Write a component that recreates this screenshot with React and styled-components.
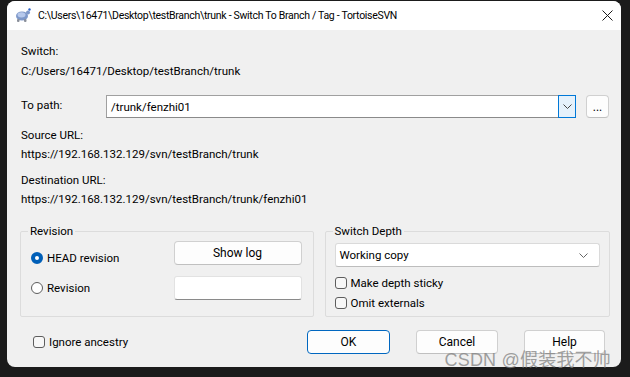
import React from "react";
import styled, { createGlobalStyle } from "styled-components";

const GlobalStyle = createGlobalStyle`
  html, body {
    margin: 0;
    padding: 0;
    background: #1b1b1b;
  }
  body {
    font-family: Roboto, "Liberation Sans", "Noto Sans CJK SC", sans-serif;
    font-size: 11.5px;
    color: #000;
  }
  #root {
    width: 630px;
    height: 377px;
    overflow: hidden;
  }
`;

const Screen = styled.div`
  position: relative;
  width: 630px;
  height: 377px;
  padding: 1px 9px 0 7px;
  box-sizing: border-box;
`;

const Dialog = styled.div`
  width: 614px;
  height: 366px;
  background: #f0f0f0;
  border-radius: 8px;
  overflow: hidden;
  display: flex;
  flex-direction: column;
`;

const TitleBar = styled.div`
  height: 29px;
  background: #fff;
  display: flex;
  align-items: center;
  padding: 0 2px 0 7px;
  flex-shrink: 0;
`;

const TitleText = styled.div`
  flex: 1;
  margin-left: 7px;
  font-size: 10.5px;
  letter-spacing: -0.3px;
  white-space: nowrap;
`;

const CloseButton = styled.div`
  width: 24px;
  height: 29px;
  display: flex;
  align-items: center;
  justify-content: center;
`;

const Body = styled.div`
  flex: 1;
  display: flex;
  flex-direction: column;
  padding: 12px 12px 0 14px;
`;

const Line = styled.div`
  height: ${(p) => p.$h || 19}px;
  line-height: ${(p) => p.$h || 19}px;
  margin-top: ${(p) => p.$mt || 0}px;
  white-space: nowrap;
`;

const PathRow = styled.div`
  display: flex;
  align-items: center;
  margin-top: 14px;
  height: 23px;
`;

const PathLabel = styled.div`
  width: 85px;
  margin-top: -3px;
`;

const Combo = styled.div`
  display: flex;
  align-items: stretch;
  height: ${(p) => p.$h || 23}px;
  background: #fff;
  border: 1px solid ${(p) => (p.$flat ? "#dadada" : "#a0a0a0")};
  border-bottom-color: ${(p) => (p.$flat ? "#bdbdbd" : "#8a8a8a")};
  border-radius: ${(p) => (p.$flat ? 3 : 0)}px;
  box-sizing: border-box;
  flex: ${(p) => (p.$grow ? 1 : "none")};
`;

const ComboText = styled.div`
  flex: 1;
  padding-left: ${(p) => p.$pl || 4}px;
  display: flex;
  align-items: center;
`;

const DropButton = styled.div`
  width: 16px;
  display: flex;
  align-items: center;
  justify-content: center;
  background: ${(p) => (p.$active ? "#e5f1fb" : "transparent")};
  border: 1px solid ${(p) => (p.$active ? "#0078d7" : "transparent")};
  margin: -1px -1px -1px 0;
  padding-right: ${(p) => (p.$active ? 0 : 8)}px;
`;

const Button = styled.div`
  box-sizing: border-box;
  width: ${(p) => p.$w}px;
  height: ${(p) => p.$h || 24}px;
  background: #fdfdfd;
  border: 1px solid ${(p) => (p.$default ? "#0067c0" : "#d0d0d0")};
  border-bottom-color: ${(p) => (p.$default ? "#0067c0" : "#c0c0c0")};
  border-radius: 4px;
  display: flex;
  align-items: center;
  justify-content: center;
  font-size: 12px;
`;

const Groups = styled.div`
  display: flex;
  gap: 11px;
  margin-top: 14px;
  margin-left: -1px;
  margin-right: -1px;
`;

const Group = styled.fieldset`
  margin: 0;
  width: ${(p) => p.$w}px;
  box-sizing: border-box;
  height: 94px;
  border: 1px solid #dcdcdc;
  border-radius: 2px;
  padding: ${(p) => p.$pad};
`;

const Legend = styled.legend`
  padding: 0 2px;
  margin-left: ${(p) => p.$ml}px;
  line-height: 16px;
`;

const RevisionGrid = styled.div`
  display: grid;
  grid-template-columns: 1fr 128px;
  row-gap: 8px;
  align-items: start;
`;

const Option = styled.label`
  display: flex;
  align-items: center;
  gap: 4px;
  height: ${(p) => p.$h || 20}px;
  margin-top: ${(p) => p.$mt || 0}px;
`;

const Radio = styled.span`
  width: 12px;
  height: 12px;
  border-radius: 50%;
  box-sizing: border-box;
  border: ${(p) => (p.$checked ? "4px solid #005fb8" : "1px solid #5d5d5d")};
  background: #fff;
  flex-shrink: 0;
`;

const Check = styled.span`
  width: 12px;
  height: 12px;
  border-radius: 3px;
  box-sizing: border-box;
  border: 1px solid #5d5d5d;
  background: #f7f7f7;
  flex-shrink: 0;
`;

const TextField = styled.div`
  width: 128px;
  height: 24px;
  box-sizing: border-box;
  background: #fff;
  border: 1px solid #e2e2e2;
  border-bottom: 1px solid #8a8a8a;
  border-radius: 3px;
`;

const DepthStack = styled.div`
  display: flex;
  flex-direction: column;
`;

const Footer = styled.div`
  display: flex;
  align-items: center;
  margin-top: 13px;
  margin-left: 12px;
  margin-right: 4px;
`;

const FooterButtons = styled.div`
  margin-left: auto;
  display: flex;
  gap: 26px;
`;

const Watermark = styled.div`
  position: absolute;
  right: 19px;
  bottom: 6px;
  font-family: "Liberation Sans", "Noto Sans CJK SC", sans-serif;
  font-size: 18px;
  color: rgba(130, 130, 130, 0.75);
  white-space: nowrap;
  letter-spacing: 0.2px;
`;

function TurtleIcon() {
  return (
    <svg width="17" height="15" viewBox="0 0 17 15">
      <ellipse cx="8" cy="8" rx="6" ry="4.5" fill="#7e98c9" />
      <ellipse cx="7.5" cy="6.8" rx="4" ry="2.6" fill="#b7c9ec" />
      <circle cx="14" cy="4.5" r="2" fill="#7e98c9" />
      <circle cx="15.5" cy="1.5" r="1.2" fill="#2a62c9" />
      <rect x="3" y="11" width="2.5" height="3" rx="1" fill="#8a8f9a" />
      <rect x="10" y="11" width="2.5" height="3" rx="1" fill="#8a8f9a" />
    </svg>
  );
}

function Chevron({ color = "#444" }) {
  return (
    <svg width="9" height="5" viewBox="0 0 9 5">
      <path d="M0.5 0.5 L4.5 4.5 L8.5 0.5" fill="none" stroke={color} strokeWidth="1" />
    </svg>
  );
}

export default function App() {
  return (
    <>
      <GlobalStyle />
      <Screen>
        <Dialog>
          <TitleBar>
            <TurtleIcon />
            <TitleText>
              C:\Users\16471\Desktop\testBranch\trunk - Switch To Branch / Tag - TortoiseSVN
            </TitleText>
            <CloseButton>
              <svg width="11" height="11" viewBox="0 0 11 11">
                <path d="M0.5 0.5 L10.5 10.5 M10.5 0.5 L0.5 10.5" stroke="#1a1a1a" strokeWidth="1" />
              </svg>
            </CloseButton>
          </TitleBar>
          <Body>
            <Line>Switch:</Line>
            <Line $h={20}>C:/Users/16471/Desktop/testBranch/trunk</Line>
            <PathRow>
              <PathLabel>To path:</PathLabel>
              <Combo $grow>
                <ComboText>/trunk/fenzhi01</ComboText>
                <DropButton $active>
                  <Chevron />
                </DropButton>
              </Combo>
              <Button $w={23} $h={23} style={{ marginLeft: 10 }}>
                ...
              </Button>
            </PathRow>
            <Line $mt={8}>Source URL:</Line>
            <Line>https://192.168.132.129/svn/testBranch/trunk</Line>
            <Line $mt={7}>Destination URL:</Line>
            <Line>https://192.168.132.129/svn/testBranch/trunk/fenzhi01</Line>
            <Groups>
              <Group $w={294} $pad="2px 11px 0 10px">
                <Legend $ml={-3}>Revision</Legend>
                <RevisionGrid>
                  <Option $mt={7}>
                    <Radio $checked />
                    HEAD revision
                  </Option>
                  <Button $w={128}>Show log</Button>
                  <Option $mt={2}>
                    <Radio />
                    Revision
                  </Option>
                  <TextField />
                </RevisionGrid>
              </Group>
              <Group $w={286} $pad="4px 9px 0 9px">
                <Legend $ml={-2}>Switch Depth</Legend>
                <DepthStack>
                  <Combo $flat $h={24}>
                    <ComboText $pl={4}>Working copy</ComboText>
                    <DropButton>
                      <Chevron color="#666" />
                    </DropButton>
                  </Combo>
                  <Option $mt={6}>
                    <Check />
                    Make depth sticky
                  </Option>
                  <Option>
                    <Check />
                    Omit externals
                  </Option>
                </DepthStack>
              </Group>
            </Groups>
            <Footer>
              <Option>
                <Check />
                Ignore ancestry
              </Option>
              <FooterButtons>
                <Button $w={83} $default>
                  OK
                </Button>
                <Button $w={82}>Cancel</Button>
                <Button $w={81}>Help</Button>
              </FooterButtons>
            </Footer>
          </Body>
        </Dialog>
        <Watermark>CSDN @假装我不帅</Watermark>
      </Screen>
    </>
  );
}
